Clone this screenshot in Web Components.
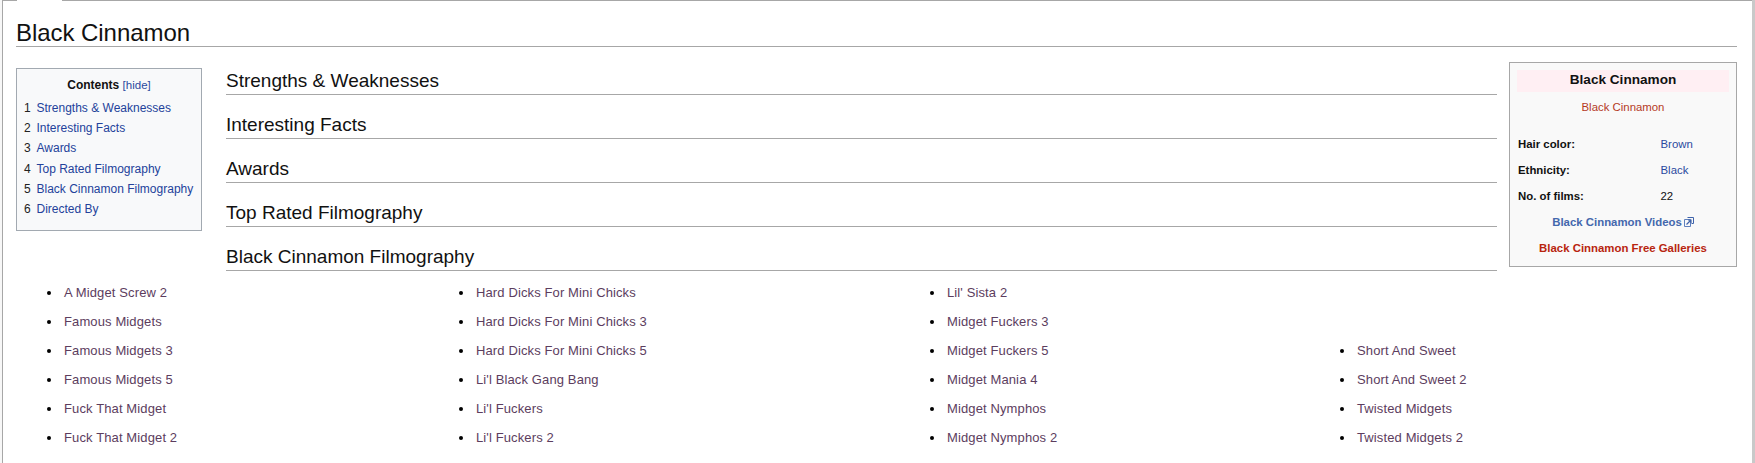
<!DOCTYPE html>
<html lang="en">
<head>
<meta charset="utf-8">
<title>Black Cinnamon</title>
<style>
    html, body { margin: 0; height: 463px; overflow: hidden; background: #fff; }
    body { font-family: "Liberation Sans", Arial, sans-serif; color: #000; }
</style>
</head>
<body>
<wiki-page>
    <span slot="title">Black Cinnamon</span>
    <wiki-toc slot="toc">
        <toc-item num="1">Strengths &amp; Weaknesses</toc-item>
        <toc-item num="2">Interesting Facts</toc-item>
        <toc-item num="3">Awards</toc-item>
        <toc-item num="4">Top Rated Filmography</toc-item>
        <toc-item num="5">Black Cinnamon Filmography</toc-item>
        <toc-item num="6">Directed By</toc-item>
    </wiki-toc>
    <section-heading slot="sections" first>Strengths &amp; Weaknesses</section-heading>
    <section-heading slot="sections">Interesting Facts</section-heading>
    <section-heading slot="sections">Awards</section-heading>
    <section-heading slot="sections">Top Rated Filmography</section-heading>
    <section-heading slot="sections">Black Cinnamon Filmography</section-heading>
    <wiki-infobox slot="infobox" name="Black Cinnamon" hair="Brown" ethnicity="Black" films="22"></wiki-infobox>
    <film-list slot="films"></film-list>
</wiki-page>

<script>
    // page frame: grey edges, title, three column top row, film list under it
    class WikiPage extends HTMLElement {
        constructor() {
            super();
            this.attachShadow({ mode: 'open' }).innerHTML = `
                <style>
                    :host { display: flex; height: 463px; background: #f7f7f7; }
                    .frame {
                        flex: 1;
                        margin-left: 2px;
                        border-left: 1px solid #a7a7a7;
                        background: #fff;
                        min-width: 0;
                    }
                    .tabline { display: flex; height: 1px; }
                    .tabline i { display: block; background: #a7a7a7; }
                    .tabline i:first-child { width: 14px; }
                    .tabline b { display: block; width: 45px; }
                    .tabline i:last-child { flex: 1; }
                    .content { padding: 0 15px 0 13px; }
                    h1 {
                        margin: 0;
                        height: 46px;
                        box-sizing: border-box;
                        padding-top: 18px;
                        font-size: 24px;
                        line-height: 28px;
                        font-weight: 400;
                        letter-spacing: -0.05px;
                        color: #111;
                        border-bottom: 1px solid #a7a7a7;
                    }
                    .top { display: grid; grid-template-columns: 186px 1295px 240px; }
                    .left { padding-top: 21px; }
                    .mid { margin-left: 24px; padding-top: 15px; }
                    .right { padding-top: 15px; margin-left: 12px; }
                    .strip { width: 3px; background: #c9c9c9; }
                </style>
                <div class="frame">
                    <div class="tabline"><i></i><b></b><i></i></div>
                    <div class="content">
                        <h1><slot name="title"></slot></h1>
                        <div class="top">
                            <div class="left"><slot name="toc"></slot></div>
                            <div class="mid"><slot name="sections"></slot></div>
                            <div class="right"><slot name="infobox"></slot></div>
                        </div>
                        <slot name="films"></slot>
                    </div>
                </div>
                <div class="strip"></div>
            `;
        }
    }

    class WikiToc extends HTMLElement {
        constructor() {
            super();
            this.attachShadow({ mode: 'open' }).innerHTML = `
                <style>
                    :host {
                        display: block;
                        box-sizing: border-box;
                        width: 186px;
                        height: 163px;
                        padding: 9px 7px 0 7px;
                        background: #f8f9fa;
                        border: 1px solid #a2a9b1;
                        font-size: 12px;
                    }
                    .title { text-align: center; font-weight: 700; line-height: 15px; margin-bottom: 5px; color: #111; }
                    .title span { font-weight: 400; color: #2b4aa0; font-size: 11.5px; }
                </style>
                <div class="title">Contents <span>[hide]</span></div>
                <slot></slot>
            `;
        }
    }

    class TocItem extends HTMLElement {
        constructor() {
            super();
            this.attachShadow({ mode: 'open' }).innerHTML = `
                <style>
                    :host { display: flex; height: 20.2px; line-height: 20.2px; white-space: nowrap; font-size: 12px; }
                    .n { width: 12.5px; color: #222; }
                    .t { color: #23429b; }
                </style>
                <span class="n"></span><span class="t"><slot></slot></span>
            `;
        }
        connectedCallback() {
            this.shadowRoot.querySelector('.n').textContent = this.getAttribute('num');
        }
    }

    class SectionHeading extends HTMLElement {
        constructor() {
            super();
            this.attachShadow({ mode: 'open' }).innerHTML = `
                <style>
                    :host {
                        display: block;
                        box-sizing: border-box;
                        height: 44px;
                        line-height: 24px;
                        padding-top: 18px;
                        font-size: 19px;
                        color: #111;
                        border-bottom: 1px solid #a7a7a7;
                    }
                    :host([first]) { height: 33px; padding-top: 7px; }
                </style>
                <slot></slot>
            `;
        }
    }

    class WikiInfobox extends HTMLElement {
        connectedCallback() {
            const name = this.getAttribute('name');
            const rows = [
                ['Hair color:', this.getAttribute('hair'), true],
                ['Ethnicity:', this.getAttribute('ethnicity'), true],
                ['No. of films:', this.getAttribute('films'), false],
            ];
            this.attachShadow({ mode: 'open' }).innerHTML = `
                <style>
                    :host {
                        display: block;
                        box-sizing: border-box;
                        width: 228px;
                        height: 205px;
                        padding: 7px;
                        background: #f9f9f9;
                        border: 1px solid #a7a7a7;
                        font-size: 11.4px;
                    }
                    .head {
                        height: 22px;
                        line-height: 20px;
                        background: #ffeff3;
                        text-align: center;
                        font-size: 13.6px;
                        font-weight: 700;
                        color: #111;
                    }
                    .sub { text-align: center; color: #b5391f; line-height: 16px; margin: 7px 0 16px; }
                    .row { display: grid; grid-template-columns: 142.5px 1fr; height: 26px; line-height: 26px; padding-left: 1px; color: #111; }
                    .row b { font-weight: 700; }
                    .row a { color: #2a4a9f; }
                    .ext, .free { display: block; text-align: center; height: 26px; line-height: 26px; font-weight: 700; }
                    .ext { color: #4468ad; }
                    .ext svg { vertical-align: -1px; margin-left: 2px; }
                    .free { color: #b8250f; }
                </style>
                <div class="head">${name}</div>
                <div class="sub">${name}</div>
                ${rows.map(([k, v, link]) => `<div class="row"><b>${k}</b>${link ? `<a>${v}</a>` : `<span>${v}</span>`}</div>`).join('')}
                <a class="ext">${name} Videos<svg width="10" height="10" viewBox="0 0 10 10" fill="none"><path d="M.5 2.5h6v7h-6z" stroke="#5f80bd"/><path d="M3.5.5h6v6h-2" stroke="#3f63aa"/><path d="M2.5 7.5l4-4M4 3h3v3" stroke="#3f63aa" stroke-width="1.2"/></svg></a>
                <a class="free">${name} Free Galleries</a>
            `;
        }
    }

    const FILMS = [
        ['A Midget Screw 2', 'Famous Midgets', 'Famous Midgets 3', 'Famous Midgets 5', 'Fuck That Midget', 'Fuck That Midget 2'],
        ['Hard Dicks For Mini Chicks', 'Hard Dicks For Mini Chicks 3', 'Hard Dicks For Mini Chicks 5', "Li'l Black Gang Bang", "Li'l Fuckers", "Li'l Fuckers 2"],
        ["Lil' Sista 2", 'Midget Fuckers 3', 'Midget Fuckers 5', 'Midget Mania 4', 'Midget Nymphos', 'Midget Nymphos 2'],
        ['Short And Sweet', 'Short And Sweet 2', 'Twisted Midgets', 'Twisted Midgets 2'],
    ];

    class FilmList extends HTMLElement {
        connectedCallback() {
            this.attachShadow({ mode: 'open' }).innerHTML = `
                <style>
                    :host { display: block; margin-top: 7px; font-size: 13px; letter-spacing: 0.12px; }
                    .cols { display: grid; grid-template-columns: 412px 471px 410px 1fr; margin-left: 31px; }
                    ul { margin: 0; padding: 0; list-style: none; display: flex; flex-direction: column; justify-content: flex-end; height: 174px; }
                    li { display: flex; align-items: center; height: 29px; color: #5c3d5e; white-space: nowrap; }
                    li::before { content: ''; width: 4px; height: 4px; border-radius: 50%; background: #000; margin: 1px 13px 0 0; }
                </style>
                <div class="cols">
                    ${FILMS.map(col => `<ul>${col.map(t => `<li>${t}</li>`).join('')}</ul>`).join('')}
                </div>
            `;
        }
    }

    customElements.define('wiki-page', WikiPage);
    customElements.define('wiki-toc', WikiToc);
    customElements.define('toc-item', TocItem);
    customElements.define('section-heading', SectionHeading);
    customElements.define('wiki-infobox', WikiInfobox);
    customElements.define('film-list', FilmList);
</script>
</body>
</html>
